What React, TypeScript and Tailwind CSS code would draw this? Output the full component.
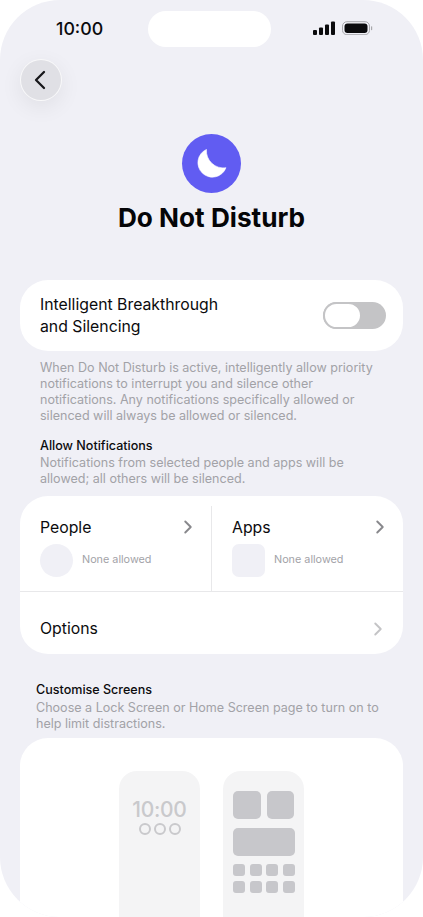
import { ChevronRight, ChevronLeft } from "lucide-react";

const StatusBar = () => (
  <div className="relative flex h-[59px] items-start justify-between pt-[11px] pl-[56px] pr-[50px]">
    <span className="text-[17.8px] leading-[36px] font-medium text-[#0b0b0d]">10:00</span>
    {/* dynamic island */}
    <div className="absolute left-[148px] top-[11px] h-[36px] w-[123px] rounded-full bg-white" />
    <svg width="60" height="14" viewBox="0 0 60 14" className="mt-[10px]">
      <rect x="0" y="9" width="4" height="5" rx="1" fill="#0b0b0d" />
      <rect x="6" y="6.5" width="4" height="7.5" rx="1" fill="#0b0b0d" />
      <rect x="12" y="3.5" width="4" height="10.5" rx="1" fill="#0b0b0d" />
      <rect x="18" y="0.5" width="4" height="13.5" rx="1" fill="#0b0b0d" />
      <rect x="29.5" y="0.7" width="27" height="13" rx="4.4" fill="none" stroke="#a8a8ac" strokeWidth="1" />
      <rect x="31.5" y="2.5" width="23" height="9.4" rx="3" fill="#0b0b0d" />
      <rect x="58" y="5.2" width="1.2" height="4" rx="0.6" fill="#a8a8ac" />
    </svg>
  </div>
);

const Moon = () => (
  <svg width="30" height="30" viewBox="0 0 30 30" className="mt-[1px]">
    <path d="M9.5 .4A14.5 14.5 0 1 0 29 18.7A17 17 0 0 1 9.5 .4z" fill="white" stroke="white" strokeWidth="0.6" strokeLinejoin="round" />
  </svg>
);

const LockPreview = () => (
  <div className="flex h-[180px] w-[81px] flex-col items-center rounded-t-[18px] bg-[#f4f4f5] pt-[26px]">
    <span className="text-[21px] leading-[26px] font-medium tracking-[-0.3px] text-[#c9c9cc]">10:00</span>
    <div className="flex gap-[3px]">
      <span className="h-[12px] w-[12px] rounded-full border-2 border-[#c9c9cc]" />
      <span className="h-[12px] w-[12px] rounded-full border-2 border-[#c9c9cc]" />
      <span className="h-[12px] w-[12px] rounded-full border-2 border-[#c9c9cc]" />
    </div>
  </div>
);

const HomePreview = () => (
  <div className="h-[180px] w-[81px] rounded-t-[18px] bg-[#f4f4f5] px-[10px] pt-[20px]">
    <div className="flex gap-[6px]">
      <div className="h-[28px] w-[28px] rounded-[5px] bg-[#c7c7cb]" />
      <div className="h-[28px] w-[28px] rounded-[5px] bg-[#c7c7cb]" />
    </div>
    <div className="mt-[9px] h-[28px] w-[62px] rounded-[5px] bg-[#c7c7cb]" />
    <div className="mt-[8px] grid w-[62px] grid-cols-4 gap-x-[4.6px] gap-y-[5px]">
      {[...Array(8)].map((_, i) => (
        <div key={i} className="h-[12px] w-[12px] rounded-[3px] bg-[#c7c7cb]" />
      ))}
    </div>
  </div>
);

export default function App() {
  return (
    <div className="h-[917px] w-[423px] overflow-hidden bg-white font-['Inter',sans-serif]">
      <div className="h-[917px] overflow-hidden rounded-[60px] bg-[#f0f0f6]">
        <StatusBar />

        {/* Back */}
        <div className="flex h-[75px] items-start pl-[20px]">
          <button className="flex h-[42px] w-[42px] items-center justify-center rounded-full border border-white/80 bg-[#e0e0e5] shadow-[0_6px_22px_rgba(0,0,0,0.07)]">
            <ChevronLeft size={32} strokeWidth={1.7} className="mr-[3px] text-[#17171a]" />
          </button>
        </div>

        {/* Header */}
        <div className="flex flex-col items-center">
          <div className="flex h-[59px] w-[59px] items-center justify-center rounded-full bg-[#615cf2]">
            <Moon />
          </div>
          <h1 className="mt-[8px] text-[26.2px] leading-[34px] font-bold text-[#050507]">Do Not Disturb</h1>
        </div>

        {/* Breakthrough toggle */}
        <div className="mx-[20px] mt-[45px] flex h-[71px] items-center justify-between rounded-[28px] bg-white pl-[20px] pr-[17px]">
          <p className="pt-[1px] text-[15.8px] leading-[22px] text-[#0b0b0d]">
            Intelligent Breakthrough
            <br />
            and Silencing
          </p>
          <div className="flex h-[27px] w-[63px] items-center rounded-full bg-[#c4c4c6]">
            <div className="h-[27px] w-[39px] rounded-full border-2 border-[#c4c4c6] bg-white" />
          </div>
        </div>

        <p className="mt-[9px] px-[40px] text-[12.55px] leading-[16px] text-[#a2a2a7]">
          When Do Not Disturb is active, intelligently allow priority notifications to interrupt you and silence other notifications. Any notifications specifically allowed or silenced will always be allowed or silenced.
        </p>

        <div className="mt-[14px] px-[40px] text-[12.55px] leading-[16px]">
          <h2 className="font-medium text-[#0b0b0d]">Allow Notifications</h2>
          <p className="mt-[1px] text-[#a2a2a7]">
            Notifications from selected people and apps will be allowed; all others will be silenced.
          </p>
        </div>

        {/* People / Apps / Options */}
        <div className="mx-[20px] mt-[9px] rounded-[28px] bg-white">
          <div className="flex h-[96px] border-b border-[#e8e8ea]">
            <div className="w-[192px] pt-[10px]">
              <div className="h-full border-r border-[#e8e8ea] pt-[10px] pl-[20px] pr-[12px]">
                <div className="flex items-center justify-between">
                  <span className="text-[15.8px] leading-[21px] text-[#0b0b0d]">People</span>
                  <ChevronRight size={22} strokeWidth={2.1} className="text-[#88888c]" />
                </div>
                <div className="mt-[6px] flex items-center gap-[9px]">
                  <div className="h-[33px] w-[33px] rounded-full bg-[#f0f0f6]" />
                  <span className="text-[10.8px] text-[#a2a2a7]">None allowed</span>
                </div>
              </div>
            </div>
            <div className="flex-1 pt-[20px] pl-[20px] pr-[12.5px]">
              <div className="flex items-center justify-between">
                <span className="text-[15.8px] leading-[21px] text-[#0b0b0d]">Apps</span>
                <ChevronRight size={22} strokeWidth={2.1} className="text-[#88888c]" />
              </div>
              <div className="mt-[6px] flex items-center gap-[9px]">
                <div className="h-[33px] w-[33px] rounded-[7px] bg-[#f0f0f6]" />
                <span className="text-[10.8px] text-[#a2a2a7]">None allowed</span>
              </div>
            </div>
          </div>
          <div className="flex h-[62px] items-center justify-between pt-[12px] pl-[20px] pr-[14px]">
            <span className="text-[15.8px] text-[#0b0b0d]">Options</span>
            <ChevronRight size={22} strokeWidth={2.1} className="text-[#c4c4c6]" />
          </div>
        </div>

        <div className="mt-[28px] px-[36px] text-[12.55px] leading-[16px]">
          <h2 className="font-medium text-[#0b0b0d]">Customise Screens</h2>
          <p className="mt-[2px] text-[#a2a2a7]">
            Choose a Lock Screen or Home Screen page to turn on to help limit distractions.
          </p>
        </div>

        {/* Screen previews */}
        <div className="mx-[20px] mt-[6px] flex h-[240px] justify-center gap-[23px] rounded-[28px] bg-white pt-[33px]">
          <LockPreview />
          <HomePreview />
        </div>
      </div>
    </div>
  );
}
